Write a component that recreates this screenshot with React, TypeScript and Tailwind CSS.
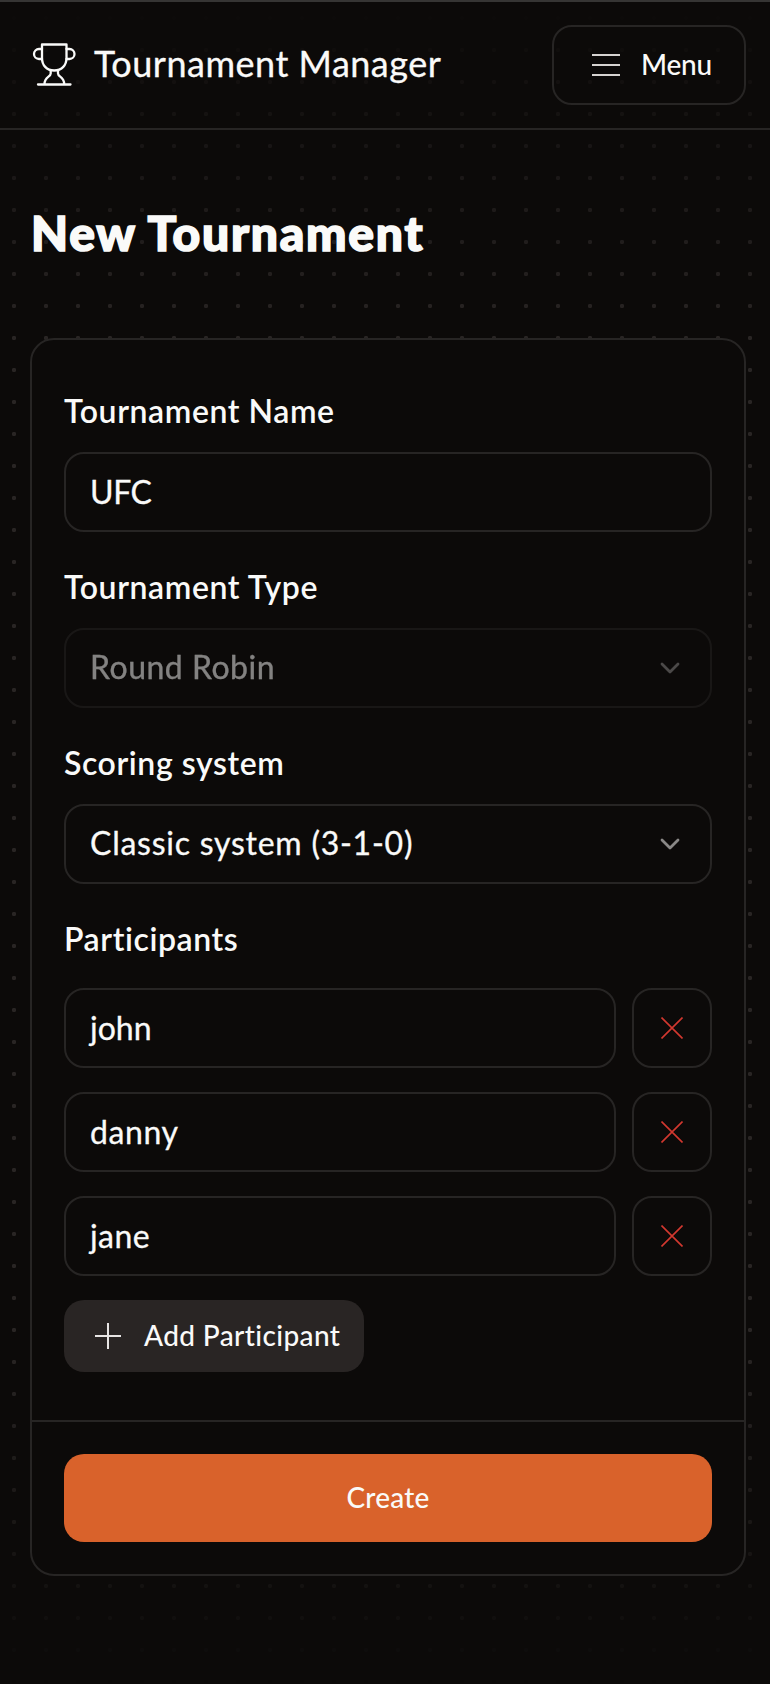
import type { ReactNode } from "react";

function TrophyIcon() {
  return (
    <svg width="44" height="44" viewBox="0 0 44 44" fill="none" stroke="currentColor" strokeWidth="2.3" strokeLinecap="round" strokeLinejoin="round" className="shrink-0">
      <path d="M10 1.5H34.5V15C34.5 22 30 27.5 22.2 27.5S10 22 10 15Z" />
      <path d="M10 6H7A5 5 0 0 0 7 16H10M34.5 6H37.5A5 5 0 0 1 37.5 16H34.5" />
      <path d="M18.7 27.5V30.5C18.7 34 12.5 33.5 12.5 41M26 27.5V30.5C26 34 32.2 33.5 32.2 41M6 41.5H38.5" />
    </svg>
  );
}

function Chevron() {
  return (
    <svg width="20" height="12" viewBox="0 0 20 12" fill="none" stroke="currentColor" strokeWidth="2.8" strokeLinecap="round" strokeLinejoin="round" className="text-[#8a8887]">
      <path d="M2 2L10 10L18 2" />
    </svg>
  );
}

function Label({ children }: { children: ReactNode }) {
  return <div className="h-12 text-[32px] leading-[46px] font-semibold tracking-[0.58px] whitespace-nowrap">{children}</div>;
}

const box = "flex h-20 items-center rounded-[20px] border-2 border-[#272524] px-6 text-[32px]";

function Participant({ name, spacing }: { name: string; spacing: string }) {
  return (
    <div className="flex gap-4">
      <div className={`${box} flex-1`}>
        <span className={`whitespace-nowrap [-webkit-text-stroke:0.3px] ${spacing}`}>{name}</span>
      </div>
      <button className="flex size-20 items-center justify-center rounded-[20px] border-2 border-[#272524] text-[#d2382f]">
        <svg width="22" height="22" viewBox="0 0 22 22" stroke="currentColor" strokeWidth="1.6">
          <path d="M0.5 0.5L21.5 21.5M21.5 0.5L0.5 21.5" />
        </svg>
      </button>
    </div>
  );
}

export default function App() {
  return (
    <div className="relative isolate min-h-[1684px] w-full bg-[#0c0a09] font-['Lato','Noto_Sans',sans-serif] text-[#fafaf9]">
      <div className="absolute inset-0 -z-10 bg-[radial-gradient(circle,#292524_2px,transparent_2.3px)] bg-[size:32px_32px] bg-[position:-2px_2px] [mask-image:linear-gradient(to_bottom,transparent,black_20%,black_80%,transparent)]" />
      <header className="flex h-[130px] items-center justify-between border-t-2 border-b-2 border-t-[#363534] border-b-[#272524] pr-6 pl-8">
        <div className="flex items-center gap-[18px]">
          <TrophyIcon />
          <span className="pb-1 text-[36px] tracking-[0.5px] whitespace-nowrap [-webkit-text-stroke:0.3px]">Tournament Manager</span>
        </div>
        <button className="flex h-20 w-[194px] items-center rounded-[20px] border-2 border-[#272524] pl-[38px] text-[28px] font-medium">
          <svg width="28" height="22" viewBox="0 0 28 22" stroke="#d6d3d1" strokeWidth="2" className="mr-[21px]">
            <path d="M0 1H28M0 11H28M0 21H28" />
          </svg>
          <span className="pb-0.5 tracking-[-0.2px]">Menu</span>
        </button>
      </header>
      <main className="px-6 pl-[30px]">
        <h1 className="flex h-[208px] items-center pb-0.5 pl-px text-[48px] font-black tracking-[1.75px] whitespace-nowrap [-webkit-text-stroke:1.6px]">New Tournament</h1>
        <form className="flex flex-col rounded-3xl border-2 border-[#272524] bg-[#0c0a09]">
          <div className="flex flex-col px-8 pt-12 pb-12">
            <Label>Tournament Name</Label>
            <div className={`${box} mt-4 mb-8 tracking-[-0.4px] [-webkit-text-stroke:0.3px]`}>UFC</div>
            <Label>Tournament Type</Label>
            <div className={`${box} mt-4 mb-8 justify-between pr-[30px] opacity-50`}>
              <span className="pb-0.5 tracking-[0.5px] [-webkit-text-stroke:0.3px]">Round Robin</span>
              <Chevron />
            </div>
            <Label>Scoring system</Label>
            <div className={`${box} mt-4 mb-8 justify-between pr-[30px]`}>
              <span className="pb-0.5 tracking-[0.75px] [-webkit-text-stroke:0.3px]">Classic system (3-1-0)</span>
              <Chevron />
            </div>
            <Label>Participants</Label>
            <div className="mt-6 flex flex-col gap-6">
              <Participant name="john" spacing="tracking-normal" />
              <Participant name="danny" spacing="tracking-[0.6px]" />
              <Participant name="jane" spacing="tracking-[0.4px]" />
              <button className="flex h-[72px] w-[300px] items-center gap-[23px] rounded-[20px] bg-[#292524] pl-[31px] text-[28px] font-medium whitespace-nowrap">
                <svg width="26" height="26" viewBox="0 0 26 26" stroke="#e7e5e4" strokeWidth="2">
                  <path d="M13 0V26M0 13H26" />
                </svg>
                <span className="pb-0.5 tracking-[0.38px]">Add Participant</span>
              </button>
            </div>
          </div>
          <div className="border-t-2 border-[#272524] p-8">
            <button className="h-[88px] w-full rounded-[20px] bg-[#d9622b] pb-0.5 text-[28px] font-medium tracking-[0.2px]">Create</button>
          </div>
        </form>
      </main>
    </div>
  );
}
